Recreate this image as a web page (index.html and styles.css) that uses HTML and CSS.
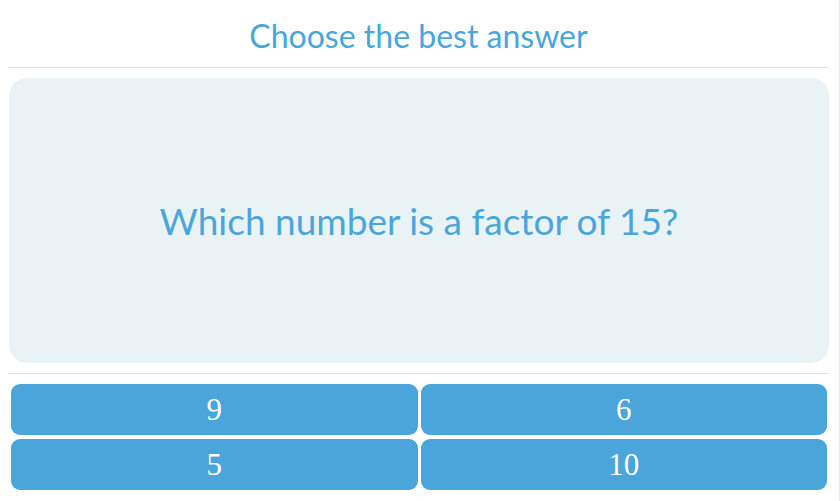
FILE: index.html
```html
<html lang="en">
<head>
<meta charset="UTF-8">
<meta name="viewport" content="width=device-width, initial-scale=1.0">
<title>Quiz</title>
<link rel="stylesheet" href="styles.css">
</head>
<body>
<div class="page">
  <div class="header">
    <h2>Choose the best answer</h2>
  </div>
  <div class="question">
    <p>Which number is a factor of 15?</p>
  </div>
  <div class="answers">
    <button class="answer">9</button>
    <button class="answer">6</button>
    <button class="answer">5</button>
    <button class="answer">10</button>
  </div>
</div>
</body>
</html>
```

FILE: styles.css
```css
body {
  margin: 0;
  padding: 0;
  background-color: #fff;
  font-family: Lato, "Open Sans", sans-serif;
}

.page {
  height: 501px;
  box-sizing: border-box;
  padding: 0 10px 0 8px;
  border-right: 1px dotted #dcdcdc;
}

.header {
  height: 64px;
  padding-top: 3px;
  border-bottom: 1px solid #e2e2e2;
  display: flex;
  justify-content: center;
  align-items: center;
}

.header h2 {
  margin: 0;
  font-size: 32px;
  font-weight: normal;
  color: #4aa6da;
}

.question {
  margin: 10px 0 10px 1px;
  height: 285px;
  background-color: #e9f3f6;
  border-radius: 18px;
  display: flex;
  justify-content: center;
  align-items: center;
}

.question p {
  margin: 0;
  font-size: 37px;
  color: #4aa6da;
}

.answers {
  border-top: 1px solid #e2e2e2;
  padding: 10px 2px 0 3px;
  display: grid;
  grid-template-columns: 1fr 1fr;
  gap: 4px 3px;
}

.answer {
  height: 51px;
  border: none;
  border-radius: 9px;
  background-color: #4aa6da;
  color: #fff;
  font-family: "Liberation Serif", "Times New Roman", serif;
  font-size: 31px;
  cursor: pointer;
}
```
